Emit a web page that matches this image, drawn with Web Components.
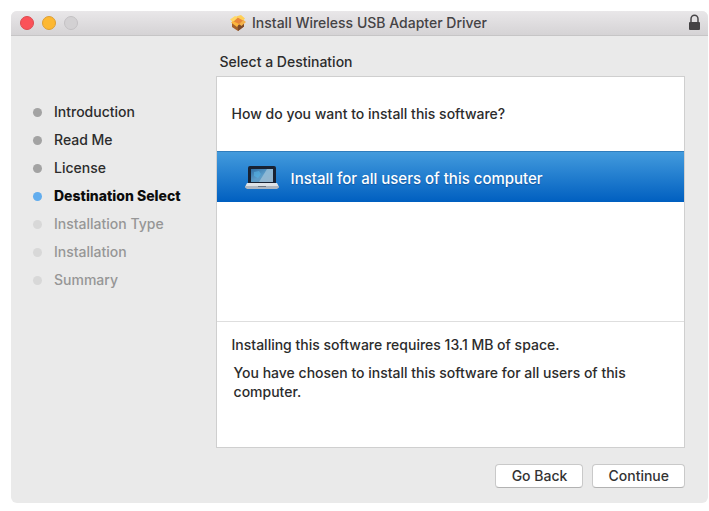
<!DOCTYPE html>
<html lang="en">
<head>
<meta charset="utf-8">
<meta name="viewport" content="width=device-width, initial-scale=1">
<title>Install Wireless USB Adapter Driver</title>
<style>
    body {
        margin: 0;
        padding: 11px 1px 8px 11px;
        box-sizing: border-box;
        min-height: 100vh;
        display: flex;
        background: #fff;
        color: #2c2c2c;
        font-family: Inter, "Liberation Sans", sans-serif;
        font-size: 14px;
        font-weight: 500;
        line-height: 20px;
    }
</style>
</head>
<body>

<installer-window>
    <window-titlebar slot="titlebar">Install Wireless USB Adapter Driver</window-titlebar>

    <step-list slot="steps">
        <step-item state="done">Introduction</step-item>
        <step-item state="done">Read Me</step-item>
        <step-item state="done">License</step-item>
        <step-item state="current">Destination Select</step-item>
        <step-item>Installation Type</step-item>
        <step-item>Installation</step-item>
        <step-item>Summary</step-item>
    </step-list>

    <destination-pane>
        <span slot="heading">Select a Destination</span>
        <span slot="question">How do you want to install this software?</span>
        <destination-option>Install for all users of this computer</destination-option>
        <span slot="space">Installing this software requires 13.1 MB of space.</span>
        <span slot="note">You have chosen to install this software for all users of this computer.</span>
    </destination-pane>

    <push-button slot="actions">Go Back</push-button>
    <push-button slot="actions">Continue</push-button>
</installer-window>

<script>
/** Base class: puts the static template of the subclass in an open shadow root. */
class InstallerElement extends HTMLElement {
    constructor() {
        super();
        this.attachShadow({ mode: 'open' });
        this.shadowRoot.innerHTML = this.constructor.template;
    }
}

/** Window frame (<installer-window>): title bar, sidebar, pane, button row. */
class InstallerWindow extends InstallerElement {
    static template = `
        <style>
            :host {
                flex: 1;
                min-width: 0;
                display: flex;
                flex-direction: column;
                background: #eaeaea;
                border-radius: 6px;
                overflow: hidden;
            }

            .content {
                flex: 1;
                display: grid;
                grid-template-columns: 7fr 18fr;
                grid-template-rows: 1fr auto;
                padding: 16px 23px 15px 22px;
            }

            main {
                display: flex;
                flex-direction: column;
                min-width: 0;
            }

            footer {
                grid-column: 1 / -1;
                display: flex;
                justify-content: flex-end;
                gap: 9px;
                padding-top: 16px;
            }
        </style>
        <slot name="titlebar"></slot>
        <div class="content">
            <slot name="steps"></slot>
            <main><slot></slot></main>
            <footer><slot name="actions"></slot></footer>
        </div>
    `;
}

/** Title bar (<window-titlebar>) */
class WindowTitlebar extends InstallerElement {
    static template = `
        <style>
            :host {
                display: grid;
                grid-template-columns: 1fr auto 1fr;
                align-items: center;
                height: 24px;
                padding: 0 7px 0 9px;
                background: linear-gradient(#e9e7e9, #d5d3d5);
                border-bottom: 1px solid #c6c5c6;
                color: #454345;
            }

            .lights {
                display: flex;
                gap: 8px;
            }

            .lights button {
                width: 14px;
                height: 14px;
                padding: 0;
                border: 1px solid #c3c1c3;
                border-radius: 50%;
                background: #d3d1d3;
            }

            .lights .close {
                background: #fb5259;
                border-color: #dc4a50;
            }

            .lights .minimize {
                background: #fdb832;
                border-color: #dd9e33;
            }

            .title {
                display: flex;
                align-items: center;
                gap: 6px;
                padding-right: 4px;
            }

            .lock {
                justify-self: end;
            }

            svg {
                display: block;
            }
        </style>
        <div class="lights">
            <button class="close" aria-label="Close"></button>
            <button class="minimize" aria-label="Minimize"></button>
            <button aria-label="Zoom" disabled></button>
        </div>
        <div class="title">
            <svg width="16" height="16" viewBox="0 0 16 16" aria-hidden="true">
                <path d="M2 7l12-1v5.500L8 16l-6-4z" fill="#a4602a"/>
                <path d="M8 10l6-3v4.500L8 16z" fill="#7d4a2a"/>
                <path d="M2 6l5-4 7 3-5 5z" fill="#e8863a"/>
                <path d="M0 4.500L5 1l3 1.500L3 7z" fill="#ffd766"/>
                <path d="M6 1.500L11 0l4 3.500-2 2z" fill="#ffcf55"/>
                <path d="M1 7.500L3 6l6 3-2 3z" fill="#fbb53c"/>
                <path d="M9 9l4.500-4L16 7l-4.500 4z" fill="#f3b14a"/>
            </svg>
            <slot></slot>
        </div>
        <svg class="lock" width="13" height="18" viewBox="0 0 13 18" aria-hidden="true">
            <path d="M3 8V5a3.500 3.800 0 0 1 7 0v3" fill="none" stroke="#484648" stroke-width="1.500"/>
            <rect x="1" y="8" width="11" height="8" rx="1" fill="#444244"/>
        </svg>
    `;
}

/** Sidebar list (<step-list>) */
class StepList extends InstallerElement {
    static template = `
        <style>
            :host {
                display: block;
                padding-top: 50px;
            }

            nav {
                display: flex;
                flex-direction: column;
                gap: 8px;
            }
        </style>
        <nav aria-label="Steps"><slot></slot></nav>
    `;
}

/** One step (<step-item state="done|current">); no state means still to come. */
class StepItem extends InstallerElement {
    static template = `
        <style>
            :host {
                display: flex;
                align-items: center;
                gap: 12px;
                color: #969696;
            }

            :host::before {
                content: '';
                width: 9px;
                height: 9px;
                border-radius: 50%;
                background: #d8d8d8;
            }

            :host([state="done"]) {
                color: #2c2c2c;
            }

            :host([state="done"])::before {
                background: #a3a3a3;
            }

            :host([state="current"]) {
                color: #0c0c0c;
                font-weight: 800;
            }

            :host([state="current"])::before {
                background: #62adee;
            }
        </style>
        <slot></slot>
    `;

    connectedCallback() {
        if (this.getAttribute('state') === 'current') {
            this.setAttribute('aria-current', 'step');
        }
    }
}

/** Main pane (<destination-pane>): question, options and the disk space summary. */
class DestinationPane extends InstallerElement {
    static template = `
        <style>
            :host {
                flex: 1;
                display: flex;
                flex-direction: column;
                gap: 4px;
            }

            h1 {
                margin: 0;
                padding-left: 4px;
                font: inherit;
            }

            section {
                flex: 1;
                display: flex;
                flex-direction: column;
                background: #fff;
                border: 1px solid #cfcfcf;
            }

            p {
                margin: 0;
            }

            .question {
                padding: 27px 15px;
            }

            .options {
                flex: 1;
            }

            .summary {
                min-height: 99px;
                display: flex;
                flex-direction: column;
                gap: 8px;
                padding: 13px 15px;
                border-top: 1px solid #dedede;
            }

            .note {
                padding: 0 32px 0 2px;
                line-height: 19px;
            }
        </style>
        <h1><slot name="heading"></slot></h1>
        <section>
            <p class="question"><slot name="question"></slot></p>
            <div class="options"><slot></slot></div>
            <div class="summary">
                <p><slot name="space"></slot></p>
                <p class="note"><slot name="note"></slot></p>
            </div>
        </section>
    `;
}

/** Selected destination row (<destination-option>) */
class DestinationOption extends InstallerElement {
    static template = `
        <style>
            :host {
                display: block;
            }

            button {
                display: flex;
                align-items: center;
                gap: 12px;
                width: 100%;
                height: 51px;
                padding: 3px 28px 0;
                border: 0;
                border-top: 1px solid #2f7dbd;
                background: linear-gradient(#439bdd, #005fc0);
                color: #fff;
                font: inherit;
                font-size: 15px;
                text-align: left;
                text-shadow: 0 1px 1px rgba(0, 40, 100, 0.4);
            }
        </style>
        <button aria-pressed="true">
            <svg width="34" height="26" viewBox="0 0 34 26" aria-hidden="true">
                <defs>
                    <linearGradient id="screen" x1="0" y1="0" x2="1" y2="1">
                        <stop offset="0" stop-color="#2f6fa6"/>
                        <stop offset=".5" stop-color="#5b9cc9"/>
                        <stop offset="1" stop-color="#6d93b4"/>
                    </linearGradient>
                </defs>
                <path d="M5 0h24a2 2 0 0 1 2 2v16H3V2a2 2 0 0 1 2-2z" fill="#182233"/>
                <rect x="6" y="3" width="22" height="13" fill="url(#screen)"/>
                <path d="M22 3h6v13H14z" fill="#b7cfe0" opacity=".55"/>
                <path d="M9 6l5-1 2 3-3 4-4-2z" fill="#55b4e6" opacity=".6"/>
                <path d="M2 17h30l2 4H0z" fill="#dfe3e7"/>
                <path d="M0 20h34v1.500l-2 1.500H2l-2-1.500z" fill="#aeb6c0"/>
                <path d="M13 20h8v1h-8z" fill="#6b7480"/>
            </svg>
            <slot></slot>
        </button>
    `;
}

/** Footer button (<push-button>) */
class PushButton extends InstallerElement {
    static template = `
        <style>
            :host {
                display: block;
            }

            button {
                display: block;
                min-width: 88px;
                height: 24px;
                padding: 0 15px;
                border: 1px solid #c9c9c9;
                border-bottom-color: #b2b2b2;
                border-radius: 4px;
                background: #fff;
                color: #333;
                font: inherit;
                line-height: 20px;
            }
        </style>
        <button type="button"><slot></slot></button>
    `;
}

customElements.define('installer-window', InstallerWindow);
customElements.define('window-titlebar', WindowTitlebar);
customElements.define('step-list', StepList);
customElements.define('step-item', StepItem);
customElements.define('destination-pane', DestinationPane);
customElements.define('destination-option', DestinationOption);
customElements.define('push-button', PushButton);
</script>
</body>
</html>
